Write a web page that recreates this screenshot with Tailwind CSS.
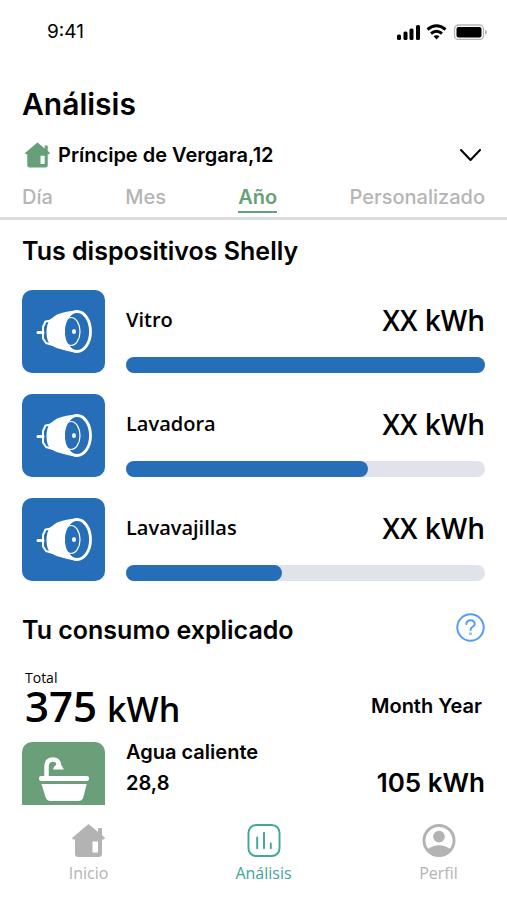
<!DOCTYPE html>
<html lang="es">
<head>
    <meta charset="UTF-8">
    <meta name="viewport" content="width=device-width, initial-scale=1.0">
    <title>Análisis</title>
    <script src="https://cdn.jsdelivr.net/npm/@tailwindcss/browser@4"></script>
</head>
<body class="bg-white text-black font-['Inter',sans-serif]">
    <!-- Shared icons -->
    <svg class="hidden">
        <symbol id="icon-house" viewBox="0 0 33 33">
            <path fill="currentColor" fill-rule="evenodd" d="M16.500 0 26 8V5q0-1 1-1h2q1 0 1 1v6l3 3-1 1.500h-2V30q0 3-3 3H6q-3 0-3-3V15.500H1L0 14ZM20.500 17.500v11h5.500v-11Z"/>
        </symbol>
        <symbol id="icon-plug" viewBox="0 0 56 44">
            <g fill="none" stroke="#fff" stroke-linecap="round" stroke-linejoin="round">
                <path stroke-width="3" d="M2 22.500h5"/>
                <path stroke-width="2" d="M15 10.500 9.500 11.500 7 17v11.500l3 4.500 7 2"/>
            </g>
            <path fill="#fff" d="M41 .5Q30 1 21 4.500L14 9.500Q10.500 14 10.500 22.500q0 9.500 5 13l5 2.500Q30 41 41 43L33 36Q27 31 26.500 21.500 27 12 33 7Z"/>
            <ellipse cx="41" cy="21.500" rx="13.500" ry="20" fill="none" stroke="#fff" stroke-width="2.800"/>
            <ellipse cx="35" cy="21.500" rx="9" ry="14" fill="none" stroke="#fff" stroke-width="1.200"/>
            <circle cx="27" cy="21.800" r="2.200" fill="#fff"/>
            <ellipse cx="38" cy="21.500" rx="2" ry="2.500" fill="#fff"/>
        </symbol>
    </svg>

    <div class="flex flex-col h-screen">
        <!-- Status bar -->
        <div class="flex items-center justify-between h-16 pl-[47px] pr-5 shrink-0">
            <span class="text-[19px]">9:41</span>
            <svg class="w-[91px] h-4" viewBox="0 0 91 16">
                <g>
                    <rect x="1" y="10.500" width="4" height="5.500" rx="1.500"/>
                    <rect x="7.500" y="7.500" width="4" height="8.500" rx="1.500"/>
                    <rect x="13.500" y="4.500" width="4" height="11.500" rx="1.500"/>
                    <rect x="20" y="1" width="4" height="15" rx="1.500"/>
                </g>
                <g fill="none" stroke="#000" stroke-width="3">
                    <path d="M31.500 5.500q9-7.500 18 0"/>
                    <path d="M35 9.500q5.500-4.500 11 0"/>
                </g>
                <path d="M37.500 12.300q3-2 6 0l-3 3.200Z"/>
                <rect x="58.500" y="1" width="29" height="14.500" rx="4" fill="none" stroke="#b5b5b5" stroke-width="1.300"/>
                <rect x="60.500" y="3" width="25" height="10.500" rx="2"/>
                <path fill="#b5b5b5" d="M89 6q2 .5 2 2.300T89 10.500Z"/>
            </svg>
        </div>

        <main class="flex-1 min-h-0 overflow-hidden">
            <header class="px-[22px] pt-[22px]">
                <h1 class="text-[30px] leading-9 font-semibold">Análisis</h1>
                <div class="flex items-center mt-[17px] h-8 pr-1">
                    <svg class="w-[25px] h-[26px] ml-[3px] mr-2 text-[#66a078]"><use href="#icon-house"/></svg>
                    <select aria-label="Vivienda" class="flex-1 min-w-0 appearance-none bg-transparent text-xl font-semibold">
                        <option>Príncipe de Vergara,12</option>
                    </select>
                    <svg class="w-[21px] h-3 pointer-events-none" viewBox="0 0 21 12" fill="none" stroke="#000" stroke-width="2" stroke-linecap="round" stroke-linejoin="round">
                        <path d="m1 1 9.500 10L20 1"/>
                    </svg>
                </div>
            </header>

            <!-- Period tabs -->
            <div class="flex items-start justify-between mt-3 px-[22px] h-[37px] border-b-3 border-[#dcdcdc] text-xl leading-7 font-medium text-[#b5b5b5]">
                <button>Día</button>
                <button>Mes</button>
                <button class="border-b-2 border-[#66a078] font-semibold text-[#66a078]">Año</button>
                <button>Personalizado</button>
            </div>

            <!-- Devices -->
            <section class="px-[22px] pt-[15px]">
                <h2 class="text-[25px] leading-8 font-semibold">Tus dispositivos Shelly</h2>
                <ul class="mt-[23px] space-y-[21px] font-['Open_Sans',sans-serif] font-semibold">
                    <li class="flex gap-[21px]">
                        <div class="grid place-items-center size-[83px] rounded-[10px] bg-[#266eb7] shrink-0">
                            <svg class="w-14 h-11"><use href="#icon-plug"/></svg>
                        </div>
                        <div class="flex flex-col justify-between flex-1 pt-[14px]">
                            <div class="flex items-center justify-between leading-8">
                                <span class="text-xl">Vitro</span>
                                <span class="text-[28px]">XX kWh</span>
                            </div>
                            <div class="h-4 rounded-full bg-[#e0e3e9]">
                                <div class="h-4 rounded-full bg-[#266eb7]" style="width: 100%"></div>
                            </div>
                        </div>
                    </li>
                    <li class="flex gap-[21px]">
                        <div class="grid place-items-center size-[83px] rounded-[10px] bg-[#266eb7] shrink-0">
                            <svg class="w-14 h-11"><use href="#icon-plug"/></svg>
                        </div>
                        <div class="flex flex-col justify-between flex-1 pt-[14px]">
                            <div class="flex items-center justify-between leading-8">
                                <span class="text-xl">Lavadora</span>
                                <span class="text-[28px]">XX kWh</span>
                            </div>
                            <div class="h-4 rounded-full bg-[#e0e3e9]">
                                <div class="h-4 rounded-full bg-[#266eb7]" style="width: 67.500%"></div>
                            </div>
                        </div>
                    </li>
                    <li class="flex gap-[21px]">
                        <div class="grid place-items-center size-[83px] rounded-[10px] bg-[#266eb7] shrink-0">
                            <svg class="w-14 h-11"><use href="#icon-plug"/></svg>
                        </div>
                        <div class="flex flex-col justify-between flex-1 pt-[14px]">
                            <div class="flex items-center justify-between leading-8">
                                <span class="text-xl">Lavavajillas</span>
                                <span class="text-[28px]">XX kWh</span>
                            </div>
                            <div class="h-4 rounded-full bg-[#e0e3e9]">
                                <div class="h-4 rounded-full bg-[#266eb7]" style="width: 43.500%"></div>
                            </div>
                        </div>
                    </li>
                </ul>
            </section>

            <!-- Consumption -->
            <section class="px-[22px] pt-8">
                <div class="flex items-start justify-between">
                    <h2 class="pt-px text-[25px] leading-8 font-semibold">Tu consumo explicado</h2>
                    <button aria-label="Ayuda">
                        <svg class="size-[29px]" viewBox="0 0 29 29" fill="none" stroke="#559df5" stroke-width="2" stroke-linecap="round">
                            <circle cx="14.500" cy="14.500" r="13.200"/>
                            <path d="M10.300 11q.5-3.800 4.200-3.800t4.200 3.500q0 2-2.200 3.200-2 1-2 3.100"/>
                            <circle cx="14.500" cy="20.800" r=".4"/>
                        </svg>
                    </button>
                </div>
                <div class="flex items-end justify-between mt-6 px-[3px]">
                    <div class="font-['Open_Sans',sans-serif]">
                        <p class="text-sm leading-4 font-medium">Total</p>
                        <p class="flex items-baseline gap-[10px] h-10 text-[42px] leading-10 font-semibold">375 <span class="text-[34px]">kWh</span></p>
                    </div>
                    <p class="text-xl leading-10 font-semibold">Month Year</p>
                </div>
                <div class="flex gap-[21px] mt-4">
                    <div class="flex justify-center size-[83px] pt-[15px] rounded-[10px] bg-[#6a9f7a] shrink-0">
                        <svg class="w-[50px] h-11" viewBox="0 0 50 44">
                            <path fill="none" stroke="#fff" stroke-width="4.500" d="M7.500 21V10q0-7.500 6.500-7.500 5 0 6 5"/>
                            <path fill="#fff" d="M19.500 3.500 25 12.500H14Q14.500 9 17 8Z"/>
                            <rect y="19" width="50" height="5" rx="2" fill="#fff"/>
                            <path fill="#fff" d="M2.500 27h45.200l-3.200 12.500Q43.500 44 39 44H12q-4.500 0-5.700-4.500Z"/>
                        </svg>
                    </div>
                    <div class="flex-1 text-xl font-semibold">
                        <p class="leading-5">Agua caliente</p>
                        <p class="flex items-center justify-between mt-[3px] leading-9">28,8 <span class="text-[26px]">105 kWh</span></p>
                    </div>
                </div>
            </section>
        </main>

        <!-- Bottom navigation -->
        <nav class="grid grid-cols-3 h-[95px] shrink-0 pt-[19px] bg-white font-['Open_Sans',sans-serif] leading-5 text-[#b3b3b3]">
            <a href="#" class="flex flex-col items-center gap-[6px] pl-2">
                <svg class="w-[33px] h-[33px]"><use href="#icon-house"/></svg>
                Inicio
            </a>
            <a href="#" class="flex flex-col items-center gap-[6px] pl-5 text-[#40a799]">
                <svg class="w-[34px] h-[33px]" viewBox="0 0 34 34" fill="none" stroke="currentColor" stroke-width="2" stroke-linecap="round">
                    <rect x="1" y="1" width="32" height="32" rx="8"/>
                    <path d="M10 14v11M17 9v16M24 20v5"/>
                </svg>
                Análisis
            </a>
            <a href="#" class="flex flex-col items-center gap-[6px] pl-8">
                <svg class="w-[34px] h-[33px]" viewBox="0 0 34 34">
                    <circle cx="17" cy="17" r="15.500" fill="none" stroke="currentColor" stroke-width="3"/>
                    <circle cx="17" cy="13" r="6" fill="currentColor"/>
                    <path fill="currentColor" d="M5 26q12-8 24 0-5 7-12 7T5 26Z"/>
                </svg>
                Perfil
            </a>
        </nav>
    </div>
</body>
</html>
